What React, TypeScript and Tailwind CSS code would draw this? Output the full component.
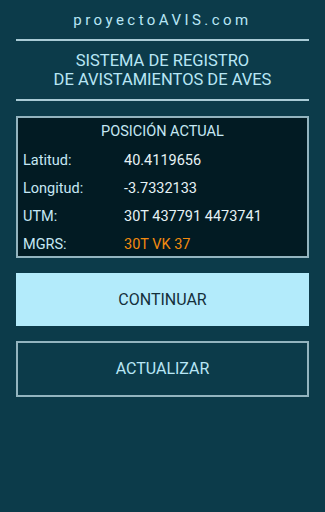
export default function App() {
  const rows = [
    { label: "Latitud:", value: "40.4119656" },
    { label: "Longitud:", value: "-3.7332133" },
    { label: "UTM:", value: "30T 437791 4473741" },
    { label: "MGRS:", value: "30T VK 37", accent: true },
  ];

  return (
    <div className="h-[512px] w-[325px] bg-[#0c3b4a] px-4 font-['Roboto',sans-serif]">
      {/* Header */}
      <p className="pt-[10px] text-center text-[15px] leading-[20px] tracking-[0.23em] text-[#b8e6f5]">
        proyectoAVIS.com
      </p>
      <div className="mt-[9px] h-[2px] bg-[#a9cbd6]" />
      <h1 className="mt-[10px] text-center text-[16.5px] leading-[19px] text-[#b8e6f5]">
        SISTEMA DE REGISTRO
        <br />
        DE AVISTAMIENTOS DE AVES
      </h1>
      <div className="mt-[10px] h-[2px] bg-[#a9cbd6]" />

      {/* Current position */}
      <div className="mt-[15px] h-[142px] border-2 border-[#93b4bf] bg-[#021b23] px-[5px]">
        <p className="pt-[4px] text-center text-[14.5px] leading-[20px] text-[#c6e8f4]">
          POSICIÓN ACTUAL
        </p>
        <div className="mt-[9px] space-y-[8px]">
          {rows.map((row) => (
            <div key={row.label} className="flex text-[14.5px] leading-[20px]">
              <span className="w-[101px] text-[#c6e8f4]">{row.label}</span>
              <span className={row.accent ? "text-[#f28a0f]" : "text-[#e6f2f5]"}>
                {row.value}
              </span>
            </div>
          ))}
        </div>
      </div>

      {/* Actions */}
      <button className="mt-[15px] flex h-[53px] w-full items-center justify-center bg-[#b3ebfb] text-[16px] text-[#15303b]">
        CONTINUAR
      </button>
      <button className="mt-[15px] flex h-[56px] w-full items-center justify-center border-2 border-[#93b4bf] text-[16px] text-[#b8e6f5]">
        ACTUALIZAR
      </button>
    </div>
  );
}
